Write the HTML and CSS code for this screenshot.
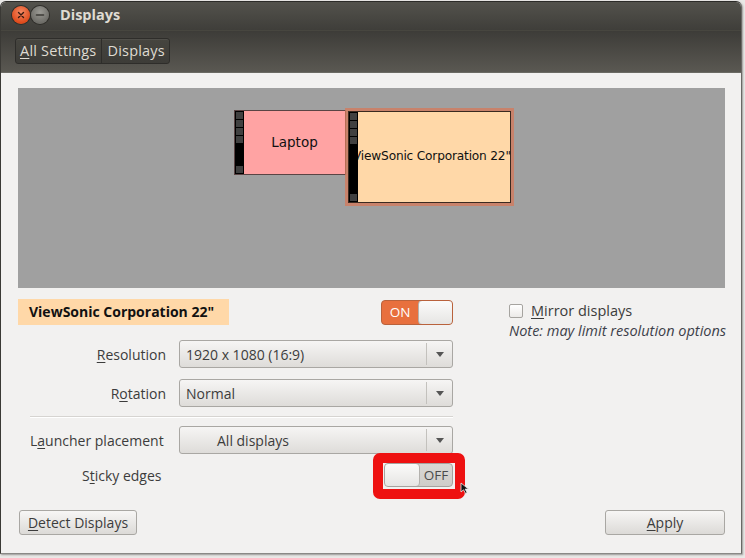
FILE: index.html
```html
<!DOCTYPE html>
<html>
<head>
<meta charset="utf-8">
<link rel="stylesheet" href="styles.css">
</head>
<body>
<div class="window">
  <div class="titlebar">
    <span class="wbtn close"><svg width="16" height="16" viewBox="0 0 16 16"><path d="M5.5 5.5l5 5M10.5 5.5l-5 5" stroke="#3a1a10" stroke-width="1.4" stroke-linecap="round"/></svg></span>
    <span class="wbtn min"><svg width="16" height="16" viewBox="0 0 16 16"><path d="M4.5 8h7" stroke="#3b3a36" stroke-width="1.6" stroke-linecap="round"/></svg></span>
    <span class="title">Displays</span>
  </div>
  <div class="toolbar">
    <div class="crumbs">
      <span class="crumb"><u>A</u>ll Settings</span>
      <span class="crumb">Displays</span>
    </div>
  </div>
  <div class="content">
    <div class="canvas">
      <div class="mon laptop" style="left:216px;top:22px;width:112px;height:65px">
        <div class="strip"><i></i><i></i><i></i><i></i><i class="gap"></i></div>
        <span class="mlabel">Laptop</span>
      </div>
      <div class="mon vs" style="left:330px;top:23px;width:163px;height:92px">
        <span class="mlabel">ViewSonic Corporation 22"</span>
        <div class="strip"><i></i><i></i><i></i><i></i><i class="gap"></i></div>
      </div>
    </div>
    <div class="settings">
      <div class="left">
        <div class="head">
          <span class="dname">ViewSonic Corporation 22"</span>
          <span class="switch on"><span class="stxt">ON</span><span class="knob"></span></span>
        </div>
        <div class="grid">
          <span class="lbl"><u>R</u>esolution</span>
          <div class="combo"><span class="ctext">1920 x 1080 (16:9)</span><span class="arrow"></span></div>
          <span class="lbl">R<u>o</u>tation</span>
          <div class="combo"><span class="ctext">Normal</span><span class="arrow"></span></div>
        </div>
        <div class="sep"></div>
        <div class="grid grid2">
          <span class="lbl lbl-left">L<u>a</u>uncher placement</span>
          <div class="combo"><span class="ctext center">All displays</span><span class="arrow"></span></div>
          <span class="lbl lbl-left sticky">S<u>t</u>icky edges</span>
          <div class="swcell">
            <span class="switch off"><span class="knob"></span><span class="stxt">OFF</span></span>
            <span class="hl"></span>
            <svg class="cursor" width="10" height="12" viewBox="0 0 10 12"><path d="M1 1v9l2.5-2.2 2 3.6 1.6-.8-2-3.5H8.5z" fill="#111" stroke="#eee" stroke-width=".8"/></svg>
          </div>
        </div>
      </div>
      <div class="right">
        <label class="check"><span class="box"></span><span><u>M</u>irror displays</span></label>
        <div class="note">Note: may limit resolution options</div>
      </div>
    </div>
    <div class="buttons">
      <button class="btn detect"><u>D</u>etect Displays</button>
      <button class="btn apply"><u>A</u>pply</button>
    </div>
  </div>
</div>
</body>
</html>
```
FILE: styles.css
```css
html, body { margin: 0; padding: 0; }
body {
  width: 745px; height: 558px; overflow: hidden;
  background: #e9e8e6;
  font-family: "Open Sans", "Noto Sans", sans-serif;
  font-size: 14px;
  color: #3c3c3c;
}
u { text-decoration: underline; text-underline-offset: 2px; text-decoration-thickness: 1px; }
.window {
  margin-top: 1px;
  width: 742px; height: 553px;
  background: #f2f1f0;
  border-radius: 6px 6px 0 0;
  border: 1px solid #3a3935;
  border-top-color: #2c2b28;
  border-bottom-color: #8a8986;
  border-right-color: #6a6965;
  box-sizing: border-box;
  display: flex; flex-direction: column;
  overflow: hidden;
  box-shadow: 1px 1px 2px rgba(0,0,0,.35);
}
.titlebar {
  height: 29px; box-sizing: border-box;
  background: linear-gradient(#53524c, #3f3e3a);
  display: flex; align-items: center;
  padding-left: 11px; padding-bottom: 3px;
  border-bottom: 1px solid #47463f;
}
.wbtn { width: 18px; height: 18px; display: inline-flex; align-items: center; justify-content: center; border-radius: 50%; }
.close { background: radial-gradient(circle at 50% 35%, #f58a64, #df4b1c 70%); box-shadow: 0 0 0 1px #2f2e2a; }
.min { background: radial-gradient(circle at 50% 35%, #9b9a94, #6e6d68 70%); box-shadow: 0 0 0 1px #2f2e2a; margin-left: 1px; }
.title { margin-left: 11px; color: #dfdbd2; font-weight: bold; font-size: 14.5px; }
.toolbar {
  height: 42px; box-sizing: border-box;
  background: linear-gradient(#3d3c38, #5a5852);
  display: flex; align-items: flex-start;
  padding: 7px 0 0 14px;
  border-bottom: 1px solid #6b6a64;
}
.crumbs {
  display: flex; height: 26px; box-sizing: border-box;
  border: 1px solid #2e2d2a; border-radius: 3px;
  background: linear-gradient(#46453f, #3d3c38);
  box-shadow: inset 0 1px 0 rgba(255,255,255,.06);
}
.crumb { color: #dfdbd2; font-size: 14.5px; line-height: 24px; padding: 0 5px 0 4px; letter-spacing: 0.2px; }
.crumb + .crumb { border-left: 1px solid #2e2d2a; padding: 0 4px 0 5px; }
.content { flex: 1; padding: 15px 16px 0 17px; display: flex; flex-direction: column; }
.canvas {
  position: relative;
  height: 200px; flex: none;
  background: #a0a0a0;
}
.mon { position: absolute; box-sizing: border-box; display: flex; overflow: hidden; }
.laptop { background: #ffa3a3; border: 1px solid #5a4444; }
.vs { background: #ffd8a8; border: 1px solid #3a2a20; outline: 3px solid rgba(214,120,90,.75); outline-offset: 0; overflow: visible; }
.strip {
  width: 9px; background: #000;
  display: flex; flex-direction: column; align-items: center; padding-top: 1px; gap: 1px;
  flex: none;
}
.vs .strip { position: absolute; left: 0; top: 0; bottom: 0; }
.strip i { display: block; width: 7px; height: 7px; background: #404040; }
.strip i.gap { margin-top: auto; margin-bottom: 1px; }
.mlabel { flex: 1; display: flex; align-items: center; justify-content: center; color: #111; font-family: "DejaVu Sans", sans-serif; white-space: nowrap; }
.laptop .mlabel { font-size: 13.5px; margin-top: -1px; }
.vs .mlabel { font-size: 12.2px; letter-spacing: -0.2px; margin: -3px 0 0 0; justify-content: center; padding-left: 4px; }
.settings { display: flex; margin-top: 11px; }
.left { width: 436px; }
.head { display: flex; align-items: center; justify-content: space-between; height: 26px; margin-bottom: 15px; }
.dname { background: #ffd8a8; color: #111; font-weight: bold; font-size: 14px; line-height: 26px; padding: 0 8px 0 11px; width: 192px; }
.switch {
  display: inline-flex; height: 25px; box-sizing: border-box; border-radius: 4px; overflow: hidden;
  border: 1px solid #a8a6a2; font-size: 13.5px;
}
.switch.on { width: 72px; background: #e8703e; border-color: #b9623c; }
.switch.on .stxt { width: 36px; color: #fff; text-align: center; line-height: 23px; }
.switch .knob { flex: 1; background: linear-gradient(#fbfbfa, #e6e5e3); border-radius: 4px; border: 1px solid #b4b2ae; margin: -1px -1px -1px 0; }
.switch.off { width: 69px; height: 24px; background: linear-gradient(#dad8d4, #cfcdc9); border-color: #a5a39f; }
.switch.off .knob { flex: none; width: 34px; margin: -1px 0 -1px -1px; }
.switch.off .stxt { flex: 1; color: #4a4a4a; text-align: center; line-height: 22px; }
.grid { display: grid; grid-template-columns: 148px 274px; column-gap: 13px; row-gap: 11px; align-items: center; }
.lbl { text-align: right; color: #3c3c3c; }
.lbl-left { text-align: left; padding-left: 12px; }
.sticky { padding-left: 64px; }
.combo {
  height: 28px; box-sizing: border-box;
  border: 1px solid #a9a7a3; border-radius: 3px;
  background: linear-gradient(#f6f5f4, #dedcd9);
  display: flex; align-items: center;
  color: #3c3c3c;
}
.ctext { flex: 1; padding-left: 6px; }
.ctext.center { padding-left: 37px; }
.arrow { width: 25px; height: 22px; border-left: 1px solid #c3c1bd; position: relative; }
.arrow::after { content: ""; position: absolute; left: 9px; top: 9px; border-left: 4px solid transparent; border-right: 4px solid transparent; border-top: 5px solid #555; }
.sep { height: 1px; background: #d6d4d1; margin: 9px 0 9px 12px; box-shadow: 0 1px 0 #fff; }
.grid2 { row-gap: 9px; grid-template-columns: 161px 274px; column-gap: 0; }
.swcell { display: flex; justify-content: flex-end; position: relative; height: 24px; }
.hl { position: absolute; right: -12px; top: -10px; width: 92px; height: 46px; box-sizing: border-box; border: 10px solid #ee1111; border-radius: 7px; }
.cursor { position: absolute; right: -17px; top: 19px; }
.right { margin-left: 56px; padding-top: 2px; }
.check { display: flex; align-items: center; gap: 8px; color: #3c3c3c; font-size: 14.5px; }
.box { width: 12px; height: 12px; border: 1px solid #a6a4a0; border-radius: 2px; background: linear-gradient(#fff, #eceae8); }
.note { font-style: italic; font-size: 14.5px; color: #3d3f4a; margin-top: 1px; white-space: nowrap; }
.buttons { display: flex; justify-content: space-between; margin-top: 23px; padding-left: 1px; }
.btn {
  height: 25px; box-sizing: border-box;
  border: 1px solid #a9a7a3; border-radius: 3px;
  background: linear-gradient(#f7f6f5, #dcdad7);
  font-family: "Open Sans", "Noto Sans", sans-serif; font-size: 14px; color: #3c3c3c;
  padding: 0;
}
.detect { width: 118px; }
.apply { width: 120px; }
```
